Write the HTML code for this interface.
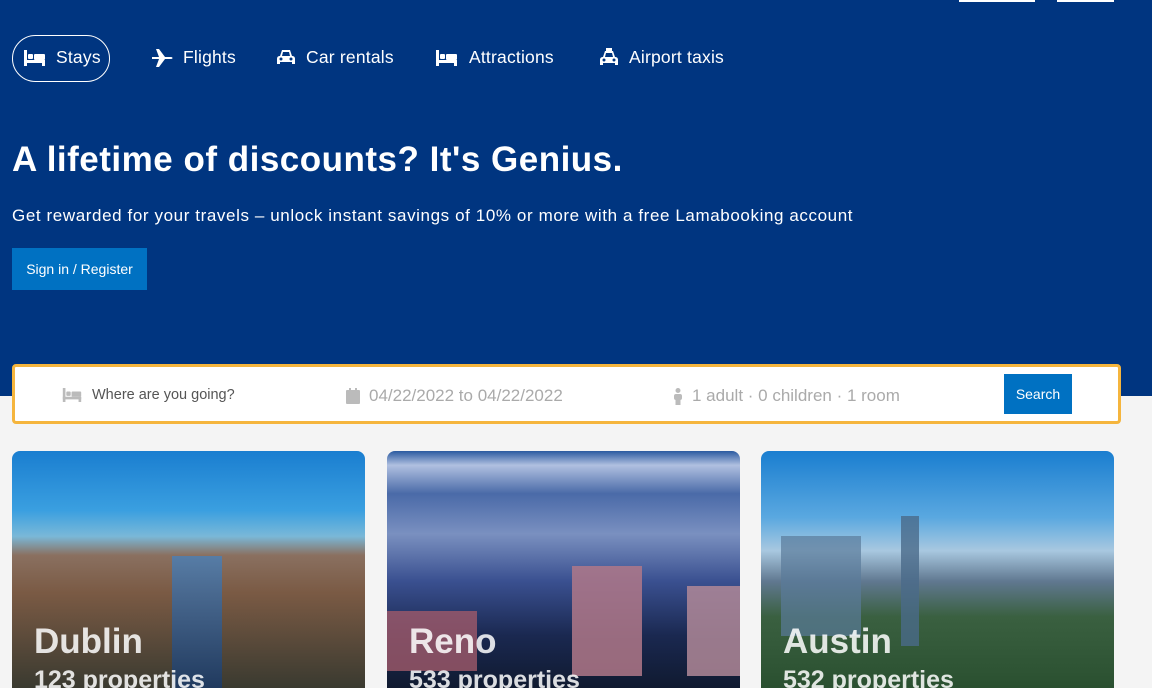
<!DOCTYPE html>
<html><head><meta charset="utf-8"><style>
*{margin:0;padding:0;box-sizing:border-box}
body{width:1152px;height:688px;overflow:hidden;background:#f4f4f4;font-family:"Liberation Sans",sans-serif;position:relative}
.hdr{position:absolute;left:0;top:0;width:1152px;height:396px;background:#003580}
.bar{position:absolute;top:0;height:2px;background:#fff}
.ic{position:absolute;top:50px}
.tx{position:absolute;top:47px;color:#fff;font-size:17.5px;letter-spacing:0.2px}
.act{position:absolute;left:12px;top:35px;width:98px;height:47px;border:1.5px solid #fff;border-radius:24px}
h1{position:absolute;left:12px;top:140px;color:#fff;font-size:35px;font-weight:bold;letter-spacing:0.5px}
.sub{position:absolute;left:12px;top:206px;color:#fff;font-size:17px;letter-spacing:0.6px}
.btn{position:absolute;left:12px;top:248px;width:135px;height:42px;background:#0071c2;color:#fff;font-size:14px;display:flex;align-items:center;justify-content:center}
.sb{position:absolute;left:12px;top:364px;width:1109px;height:60px;background:#fff;border:3px solid #f5b53d;border-radius:4px}
.f{position:absolute;top:19px;font-size:17px;color:#aaa;display:flex;align-items:center;gap:9px}
.sbtn{position:absolute;left:989px;top:7px;width:68px;height:40px;background:#0071c2;color:#fff;font-size:14px;display:flex;align-items:center;justify-content:center}
.card{position:absolute;top:451px;width:353px;height:237px;border-radius:8px 8px 0 0;overflow:hidden}
.cn{position:absolute;left:22px;top:171px;color:rgba(255,255,255,.85);font-size:35px;font-weight:bold}
.cp{position:absolute;left:22px;top:215px;color:rgba(255,255,255,.85);font-size:25px;font-weight:bold}
</style></head><body>
<div class="hdr"></div>
<div class="bar" style="left:959px;width:76px"></div>
<div class="bar" style="left:1057px;width:57px"></div>
<div class="act"></div>
<svg class="ic" style="left:24px" width="21" height="16" viewBox="0 0 21 16" fill="#fff"><rect x="0" y="0" width="3" height="16"/><rect x="0" y="10" width="21" height="3"/><rect x="4" y="4" width="5" height="5" rx="1"/><rect x="10" y="4" width="11" height="6" rx="1"/><rect x="18" y="10" width="3" height="6"/></svg>
<div class="tx" style="left:56px">Stays</div>
<svg class="ic" style="left:152px;top:49px" width="21" height="18" viewBox="0 0 21 18" fill="#fff"><path d="M0 8h7l-3-8h3l6 8h6c2 0 2 2 0 2h-6l-6 8H4l3-8H0z"/></svg>
<div class="tx" style="left:183px">Flights</div>
<svg class="ic" style="left:277px;top:49px" width="18" height="17" viewBox="0 0 18 17" fill="#fff"><path d="M3 7l2-6h8l2 6c2 0 3 1 3 3v5h-3v-2H3v2H0v-5c0-2 1-3 3-3zm2 0h8l-1-4H6z"/><circle cx="4" cy="10" r="1.5" fill="#003580"/><circle cx="14" cy="10" r="1.5" fill="#003580"/></svg>
<div class="tx" style="left:306px">Car rentals</div>
<svg class="ic" style="left:436px" width="21" height="16" viewBox="0 0 21 16" fill="#fff"><rect x="0" y="0" width="3" height="16"/><rect x="0" y="10" width="21" height="3"/><rect x="4" y="4" width="5" height="5" rx="1"/><rect x="10" y="4" width="11" height="6" rx="1"/><rect x="18" y="10" width="3" height="6"/></svg>
<div class="tx" style="left:469px">Attractions</div>
<svg class="ic" style="left:600px;top:48px" width="18" height="19" viewBox="0 0 18 19" fill="#fff"><rect x="6" y="0" width="6" height="3"/><path d="M3 9l2-6h8l2 6c2 0 3 1 3 3v5h-3v-2H3v2H0v-5c0-2 1-3 3-3zm2 0h8l-1-4H6z"/><circle cx="4" cy="12" r="1.5" fill="#003580"/><circle cx="14" cy="12" r="1.5" fill="#003580"/></svg>
<div class="tx" style="left:629px">Airport taxis</div>
<h1>A lifetime of discounts? It's Genius.</h1>
<div class="sub">Get rewarded for your travels – unlock instant savings of 10% or more with a free Lamabooking account</div>
<div class="btn">Sign in / Register</div>
<div class="sb">
<div class="f" style="left:46px;color:#555;font-size:14.5px;top:20px"><svg width="22" height="14" viewBox="0 0 21 16" fill="#bbb"><rect x="0" y="0" width="3" height="16"/><rect x="0" y="10" width="21" height="3"/><rect x="4" y="4" width="5" height="5" rx="1"/><rect x="10" y="4" width="11" height="6" rx="1"/><rect x="18" y="10" width="3" height="6"/></svg>Where are you going?</div>
<div class="f" style="left:331px"><svg width="14" height="16" viewBox="0 0 14 16" fill="#bbb"><rect x="0" y="2" width="14" height="14" rx="1"/><rect x="3" y="0" width="2" height="3"/><rect x="9" y="0" width="2" height="3"/></svg>04/22/2022 to 04/22/2022</div>
<div class="f" style="left:658px"><svg width="10" height="17" viewBox="0 0 10 17" fill="#bbb"><circle cx="5" cy="2.5" r="2.5"/><rect x="1" y="6" width="8" height="6" rx="2"/><rect x="2.5" y="11" width="5" height="6"/></svg>1 adult · 0 children · 1 room</div>
<div class="sbtn">Search</div>
</div>
<div class="card" style="left:12px;background:linear-gradient(#1a7ed0 0%,#3a9fe0 25%,#7ab8d8 36%,#8a7060 44%,#7a5a44 60%,#5a4a3a 80%,#3a3a30 100%)">
<div style="position:absolute;left:160px;top:105px;width:50px;height:132px;background:linear-gradient(#4a80b8,#1a3a6a);opacity:.8"></div>
<div class="cn">Dublin</div><div class="cp">123 properties</div></div>
<div class="card" style="left:387px;background:linear-gradient(#2a5aa0 0%,#b0c0e0 6%,#4a6aa8 18%,#7a90c0 35%,#3a5090 55%,#1a2850 78%,#101a30 100%)">
<div style="position:absolute;left:185px;top:115px;width:70px;height:110px;background:#b07888;opacity:.85"></div>
<div style="position:absolute;left:0px;top:160px;width:90px;height:60px;background:#a05a6a;opacity:.8"></div>
<div style="position:absolute;left:300px;top:135px;width:53px;height:90px;background:#b08898;opacity:.85"></div>
<div class="cn">Reno</div><div class="cp">533 properties</div></div>
<div class="card" style="left:761px;background:linear-gradient(#1a7ed0 0%,#5aa8e0 28%,#a8c8e0 42%,#607890 55%,#3a6040 70%,#2a5030 100%)">
<div style="position:absolute;left:140px;top:65px;width:18px;height:130px;background:#4a6a8a;opacity:.8"></div>
<div style="position:absolute;left:20px;top:85px;width:80px;height:100px;background:#5a7a9a;opacity:.7"></div>
<div class="cn">Austin</div><div class="cp">532 properties</div></div>
</body></html>
